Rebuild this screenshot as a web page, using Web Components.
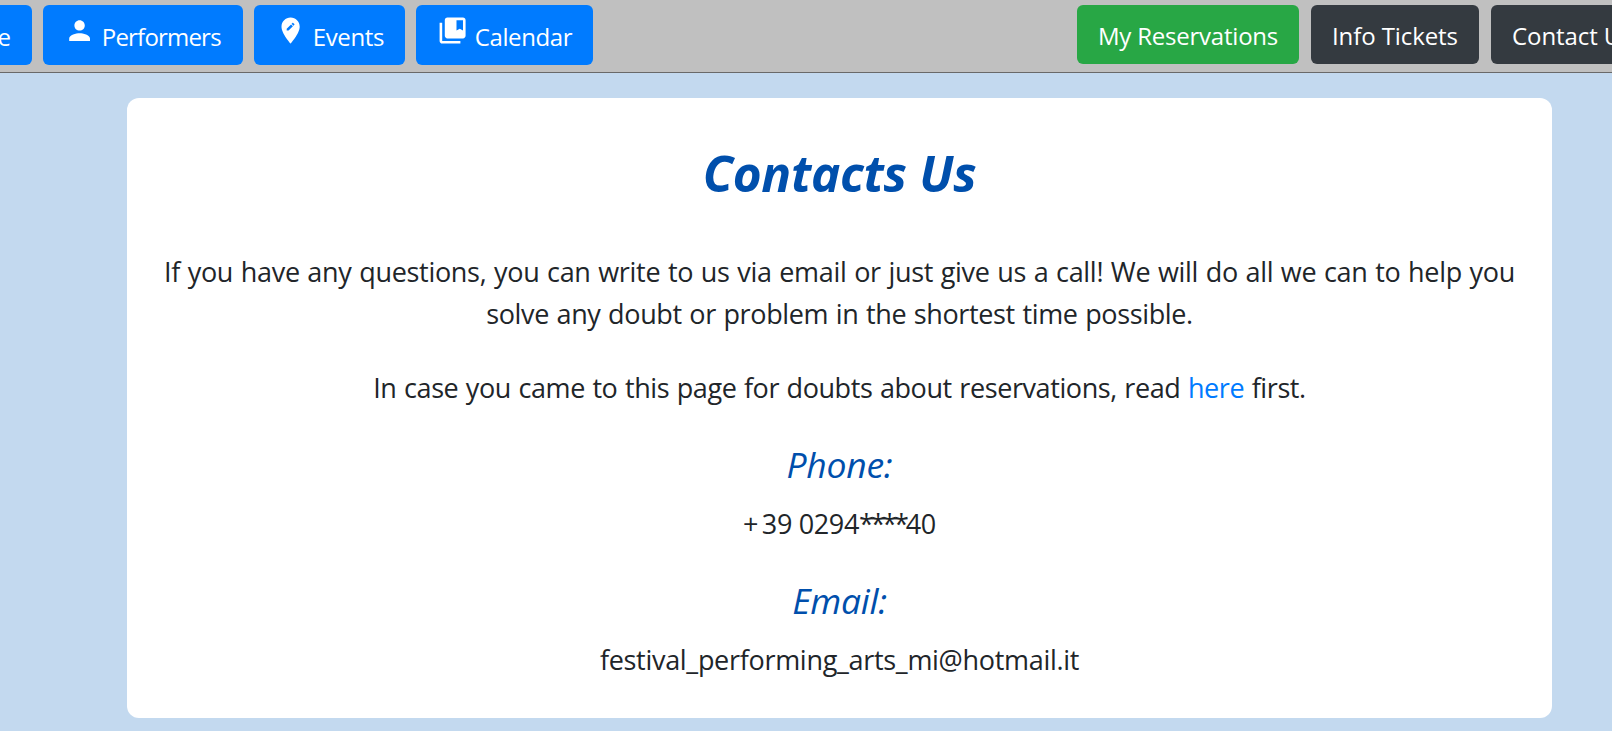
<!DOCTYPE html>
<html lang="en">
<head>
<meta charset="utf-8">
<title>Contacts Us</title>
<style>
html, body { margin: 0; height: 100%; }
body { background: #c3d9ef; color: #212529; font-family: "Open Sans", "Noto Sans", sans-serif; overflow: hidden; }
</style>
</head>
<body>
<contact-page></contact-page>
<script>
const icons = {
  person: '<path d="M12 12c2.21 0 4-1.79 4-4s-1.79-4-4-4-4 1.79-4 4 1.79 4 4 4zm0 2c-2.67 0-8 1.34-8 4v2h16v-2c0-2.66-5.33-4-8-4z"/>',
  place: '<path d="M12 2C8.14 2 5 5.14 5 9c0 5.25 7 13 7 13s7-7.75 7-13c0-3.86-3.14-7-7-7zm-1.56 10H9v-1.44l3.35-3.34 1.43 1.43L10.44 12zm4.45-4.45l-.7.7-1.44-1.44.7-.7c.15-.15.39-.15.54 0l.9.9c.15.15.15.39 0 .54z"/>',
  bookmark: '<path d="M4 6H2v14c0 1.1.9 2 2 2h14v-2H4V6z"/><path d="M20 2H8c-1.1 0-2 .9-2 2v12c0 1.1.9 2 2 2h12c1.1 0 2-.9 2-2V4c0-1.1-.9-2-2-2zm0 10l-2.5-1.5L15 12V4h5v8z"/>'
};
function define(name, render) {
  customElements.define(name, class extends HTMLElement {
    constructor() {
      super();
      this.attachShadow({ mode: 'open' });
    }
    connectedCallback() {
      this.shadowRoot.innerHTML = render(this);
    }
  });
}

define('nav-button', el => {
  const icon = icons[el.getAttribute('icon')];
  return `<style>
    :host { display: flex; box-sizing: border-box; flex: none; width: var(--w); height: 60px; padding: 0 21px; border-radius: 6px;
      background: #007bff; color: #fff; font-size: 24px; line-height: 36px; white-space: nowrap; letter-spacing: var(--ls, 0); }
    :host([variant]) { height: 59px; }
    :host([variant=success]) { background: #28a745; }
    :host([variant=dark]) { background: #343a40; }
    :host([align=end]) { justify-content: flex-end; }
    svg { flex: none; width: 31.2px; height: 31.2px; margin: 10.4px 6.6px 0 0; fill: #fff; }
    span { margin-top: 14px; }
    :host([variant]) span { margin-top: 13px; }
  </style>${icon ? `<svg viewBox="0 0 24 24">${icon}</svg>` : ''}<span><slot></slot></span>`;
});

define('nav-bar', () => `<style>
  :host { display: flex; justify-content: space-between; box-sizing: border-box; height: 73px; padding-top: 5px;
    background: #c0c0c0; border-bottom: 1px solid #696969; overflow: hidden; }
  div { display: flex; flex: none; align-items: flex-start; }
  .main { gap: 11px; margin-left: -128px; }
  .side { gap: 12px; margin-right: -30px; }
</style>
<div class="main"><slot name="main"></slot></div>
<div class="side"><slot name="side"></slot></div>`);

define('site-header', () => `<style>:host { display: block; } .g { display: contents; }</style>
<nav-bar>
  <div class="g" slot="main">
    <nav-button align="end" style="--w:160px">Home</nav-button>
    <nav-button icon="person" style="--w:200px;--ls:-.8px">Performers</nav-button>
    <nav-button icon="place" style="--w:151px;--ls:-.38px">Events</nav-button>
    <nav-button icon="bookmark" style="--w:177px;--ls:-.4px">Calendar</nav-button>
  </div>
  <div class="g" slot="side">
    <nav-button variant="success" style="--w:222px;--ls:-.22px">My Reservations</nav-button>
    <nav-button variant="dark" style="--w:168px;--ls:-.1px">Info Tickets</nav-button>
    <nav-button variant="dark" style="--w:151px;--ls:-.08px">Contact Us</nav-button>
  </div>
</nav-bar>`);

define('contact-field', () => `<style>
  :host { display: block; }
  h2 { margin: 0 0 17px; font-size: 35.5px; line-height: 43px; font-weight: 400; font-style: italic; color: #004fac; letter-spacing: -.27px; }
  p { margin: 0; line-height: 42px; letter-spacing: var(--ls); }
</style><h2><slot name="label"></slot></h2><p><slot></slot></p>`);

define('content-card', () => `<style>
  :host { display: block; box-sizing: border-box; width: 1425px; height: 620px; margin: 25px 0 0 127px; padding-top: 45px;
    background: #fff; border-radius: 12px; text-align: center; font-size: 27px; line-height: 42px; }
  h1 { margin: 0 0 48px; font-size: 49.5px; line-height: 60px; font-weight: 700; font-style: italic; color: #004fac; letter-spacing: -.3px; }
</style><h1><slot name="title"></slot></h1><slot></slot>`);

define('contact-page', () => `<style>
  :host { display: block; }
  p { margin: 0 0 32px; white-space: nowrap; word-spacing: .9px; }
  p + p { margin-bottom: 34px; letter-spacing: -.41px; }
  .l1 { letter-spacing: -.3px; }
  .l2 { letter-spacing: -.36px; }
  a { color: #007bff; text-decoration: none; }
  contact-field + contact-field { margin-top: 34px; }
  .plus { letter-spacing: 3.3px; }
  .stars { letter-spacing: -3.2px; }
</style>
<site-header></site-header>
<content-card>
  <span slot="title">Contacts Us</span>
  <p><span class="l1">If you have any questions, you can write to us via email or just give us a call! We will do all we can to help you</span><br><span class="l2">solve any doubt or problem in the shortest time possible.</span></p>
  <p>In case you came to this page for doubts about reservations, read <a href="#">here</a> first.</p>
  <contact-field style="--ls:-.35px"><span slot="label">Phone:</span><span class="plus">+</span>39 0294<span class="stars">****</span>40</contact-field>
  <contact-field style="--ls:-.3px"><span slot="label">Email:</span>festival_performing_arts_mi@hotmail.it</contact-field>
</content-card>`);
</script>
</body>
</html>
